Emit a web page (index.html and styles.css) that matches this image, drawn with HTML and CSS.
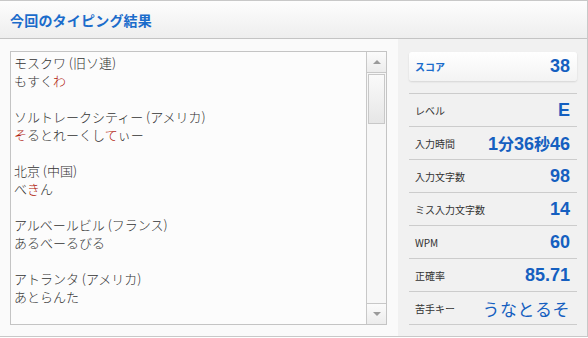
FILE: index.html
```html
<!DOCTYPE html>
<html lang="ja">
<head>
    <meta charset="UTF-8">
    <title>今回のタイピング結果</title>
    <link rel="stylesheet" href="styles.css">
</head>
<body>

<div class="result">
    <div class="result-header">
        <h1>今回のタイピング結果</h1>
    </div>

    <div class="result-body">
        <div class="word-box">
            <div class="word-list">
                <p>モスクワ (旧ソ連)<br>もすく<span class="miss">わ</span></p>
                <p>ソルトレークシティー (アメリカ)<br><span class="miss">そ</span>るとれーくし<span class="miss">て</span>ぃー</p>
                <p>北京 (中国)<br>べ<span class="miss">き</span>ん</p>
                <p>アルベールビル (フランス)<br>あるべーるびる</p>
                <p>アトランタ (アメリカ)<br>あとらんた</p>
            </div>
            <div class="scrollbar">
                <div class="scroll-btn up"></div>
                <div class="scroll-thumb"></div>
                <div class="scroll-track"></div>
                <div class="scroll-btn down"></div>
            </div>
        </div>

        <div class="score-panel">
            <div class="score-main">
                <span class="label">スコア</span>
                <span class="value">38</span>
            </div>
            <ul class="score-list">
                <li><span class="label">レベル</span><span class="value">E</span></li>
                <li><span class="label">入力時間</span><span class="value">1<small>分</small>36<small>秒</small>46</span></li>
                <li><span class="label">入力文字数</span><span class="value">98</span></li>
                <li><span class="label">ミス入力文字数</span><span class="value">14</span></li>
                <li><span class="label">WPM</span><span class="value">60</span></li>
                <li><span class="label">正確率</span><span class="value">85.71</span></li>
                <li><span class="label">苦手キー</span><span class="value keys">うなとるそ</span></li>
            </ul>
        </div>
    </div>
</div>

</body>
</html>
```

FILE: styles.css
```css
* {
    box-sizing: border-box;
    margin: 0;
    padding: 0;
}
body {
    font-family: 'Liberation Sans', 'Noto Sans CJK JP', sans-serif;
    background-color: #ffffff;
    width: 588px;
    height: 338px;
    overflow: hidden;
}
.result {
    width: 588px;
    height: 337px;
    border: 1px solid #c8c8c8;
    border-left: none;
    background-color: #fafafa;
}
.result-header {
    height: 38px;
    border-bottom: 1px solid #c4c4c4;
    background: linear-gradient(#fdfdfd, #eeeeee);
    padding-left: 10px;
    display: flex;
    align-items: center;
}
.result-header h1 {
    font-family: 'Noto Sans CJK JP', sans-serif;
    font-size: 14px;
    font-weight: bold;
    color: #1b6ccb;
    letter-spacing: 0.2px;
}
.result-body {
    display: flex;
    height: 297px;
}
.word-box {
    margin: 12px 0 0 10px;
    width: 377px;
    height: 274px;
    border: 1px solid #c4c4c4;
    background-color: #fcfcfc;
    display: flex;
}
.word-list {
    flex: 1;
    padding: 2px 0 0 3px;
    font-family: 'Noto Sans CJK JP', sans-serif;
    font-size: 13px;
    line-height: 18px;
    color: #333333;
    font-weight: 300;
}
.word-list p {
    margin-bottom: 18px;
}
.miss {
    color: #b0200c;
}
.scrollbar {
    width: 20px;
    border-left: 1px solid #c8c8c8;
    display: flex;
    flex-direction: column;
    background-color: #f7f7f7;
}
.scroll-btn {
    height: 21px;
    background: linear-gradient(#fbfbfb, #ececec);
    position: relative;
}
.scroll-btn.up {
    border-bottom: 1px solid #c8c8c8;
}
.scroll-btn.down {
    border-top: 1px solid #c8c8c8;
}
.scroll-btn::after {
    content: '';
    position: absolute;
    left: 6px;
    top: 8px;
    border-left: 4px solid transparent;
    border-right: 4px solid transparent;
}
.scroll-btn.up::after {
    border-bottom: 4px solid #9a9a9a;
}
.scroll-btn.down::after {
    border-top: 4px solid #9a9a9a;
}
.scroll-thumb {
    height: 50px;
    margin: 1px 1px 0 1px;
    border: 1px solid #c8c8c8;
    background: linear-gradient(#fafafa, #e6e6e6);
}
.scroll-track {
    flex: 1;
}
.score-panel {
    margin-left: 11px;
    width: 189px;
    background-color: #f1f1f1;
    padding: 13px 10px 0 11px;
}
.score-main {
    height: 29px;
    background: linear-gradient(#ffffff, #f3f3f3);
    border-radius: 3px;
    box-shadow: 0 1px 2px rgba(0, 0, 0, 0.12);
    display: flex;
    align-items: center;
    justify-content: space-between;
    padding: 0 7px 0 6px;
}
.score-main .label {
    font-family: 'Noto Sans CJK JP', sans-serif;
    font-size: 10px;
    font-weight: bold;
    color: #1b6ccb;
}
.score-list {
    list-style: none;
    margin-top: 12px;
    border-top: 1px solid #cccccc;
}
.score-list li {
    height: 33px;
    border-bottom: 1px solid #cccccc;
    display: flex;
    align-items: center;
    justify-content: space-between;
    padding: 0 7px 0 6px;
}
.label {
    font-family: 'Noto Sans CJK JP', sans-serif;
    font-size: 10px;
    color: #333333;
}
.value {
    font-family: 'Liberation Sans', 'Noto Sans CJK JP', sans-serif;
    font-size: 18px;
    font-weight: bold;
    color: #155fc0;
}
.value small {
    font-size: 16px;
}
.value.keys {
    font-family: 'Noto Sans CJK JP', sans-serif;
    font-size: 17px;
    font-weight: normal;
    letter-spacing: 0.5px;
}
```
